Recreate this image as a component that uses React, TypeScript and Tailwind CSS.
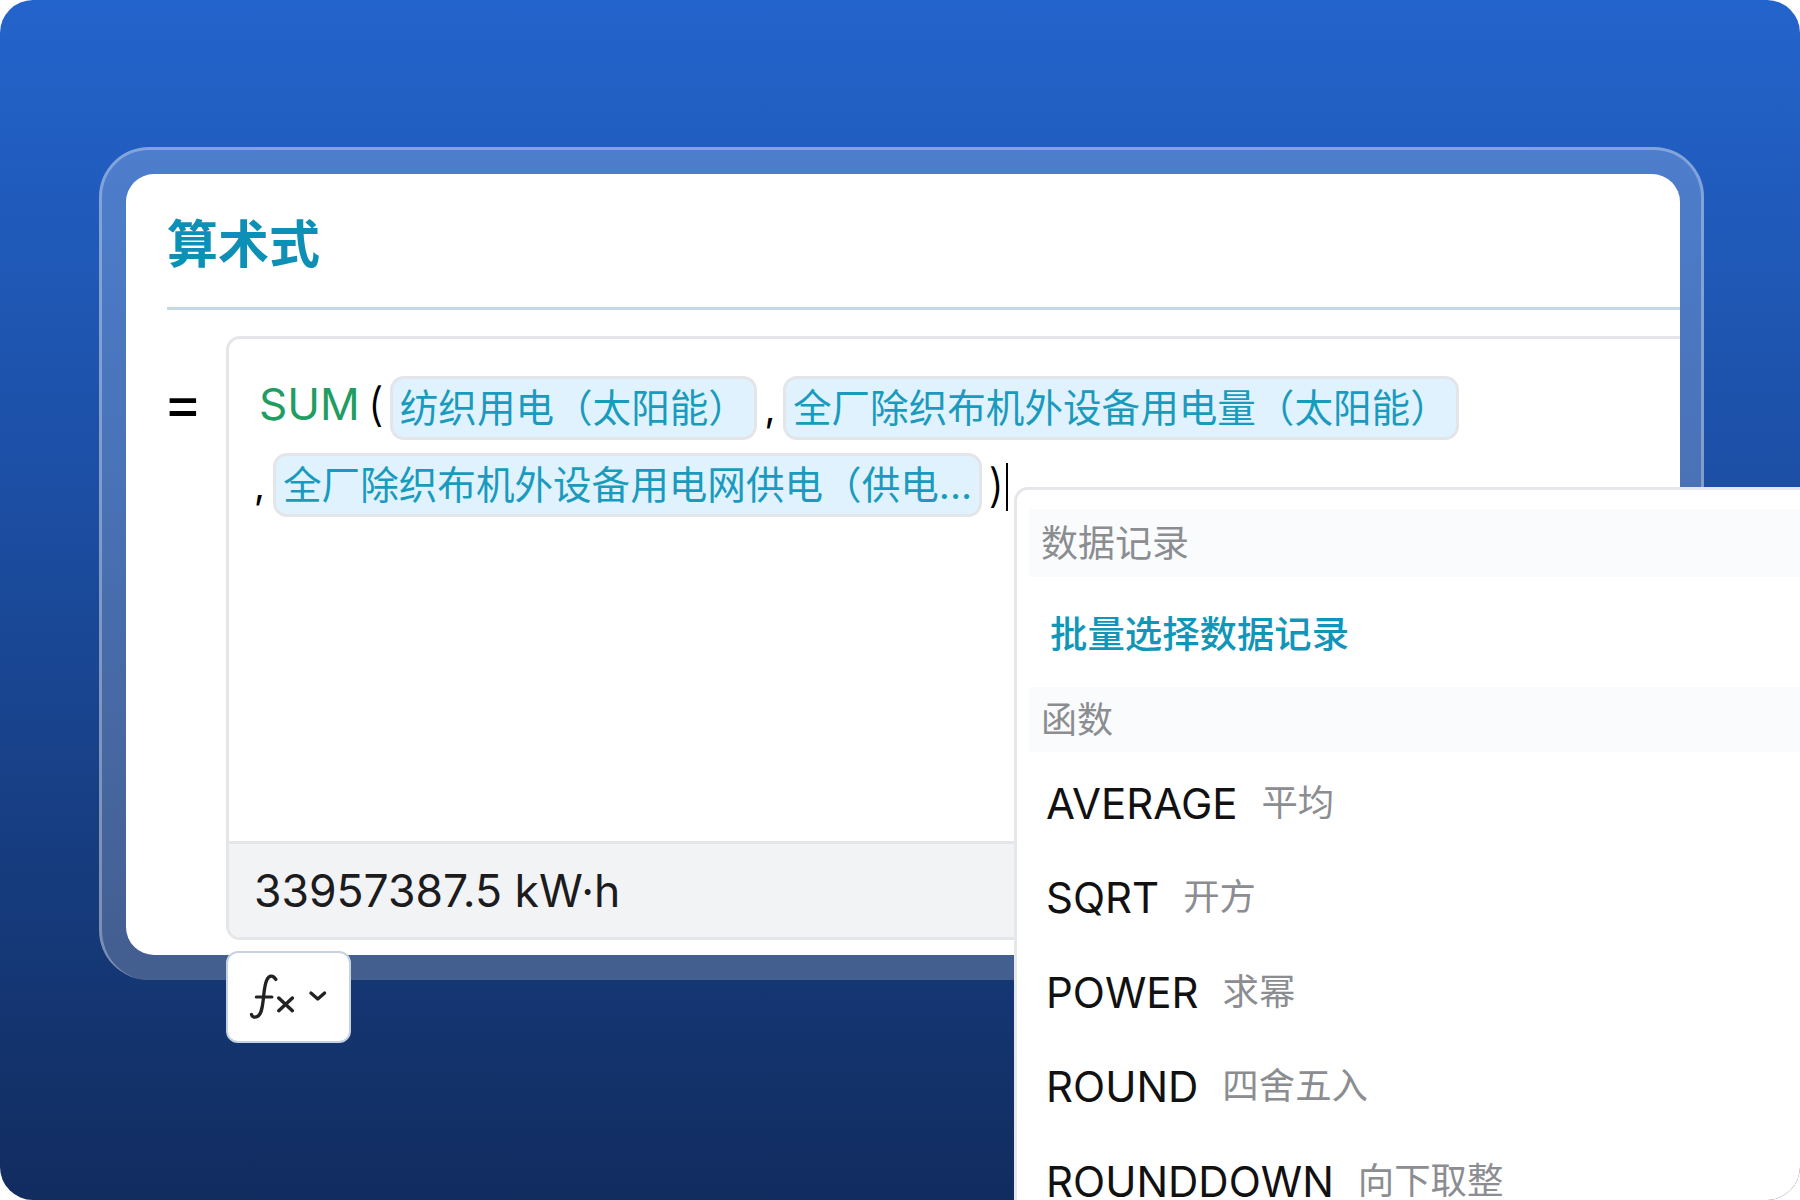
const font = '[font-family:Inter,"Noto_Sans_CJK_SC",sans-serif]'

const functions = [
  { name: 'AVERAGE', desc: '平均' },
  { name: 'SQRT', desc: '开方' },
  { name: 'POWER', desc: '求幂' },
  { name: 'ROUND', desc: '四舍五入' },
  { name: 'ROUNDDOWN', desc: '向下取整' },
]

function Chip({ children }: { children: string }) {
  return (
    <span className="flex h-[64px] shrink-0 items-center whitespace-nowrap rounded-[14px] border-[3px] border-[#e3e5e8] bg-[#e0f2fe] px-[7px] pt-[2px] text-[38.6px] text-[#1a9bbd]">
      {children}
    </span>
  )
}

function FxIcon() {
  return (
    <svg width="124" height="91" viewBox="16 22 124 91" fill="none" stroke="#222" strokeLinecap="round" strokeLinejoin="round">
      <path strokeWidth="3.4" d="M65 49C62 44 58 45 56 49C53 55 53 63 52 71C51 79 50 85 46 87C44 88 41 88 40 85" />
      <path strokeWidth="3.2" d="M45 67H61" />
      <path strokeWidth="3.6" d="M68 68L82 81M82 68L68 81" />
      <path strokeWidth="3.4" d="M101 63L108 69L115 63" />
    </svg>
  )
}

export default function App() {
  return (
    <div className={`relative h-[1200px] w-[1800px] overflow-hidden rounded-[33px] bg-gradient-to-b from-[#2364cc] via-[#1c4fa5] via-40% to-[#112c5f] ${font}`}>
      <div className="ml-[99px] h-[147px]" />
      <div className="ml-[99px] h-[833px] w-[1605px] rounded-[50px] border-[3px] border-b-0 border-white/30 bg-white/20 px-[24px] pt-[24px]">
        <div className="flex h-[781px] w-[1554px] flex-col overflow-hidden rounded-[28px] bg-white pl-[41px]">
          <h1 className="flex h-[136px] shrink-0 items-center border-b-[3px] border-[#c4d9e3] pt-[10px] text-[51px] font-bold text-[#0e8fb5]">
            算术式
          </h1>
          <div className="mt-[26px] flex items-start">
            <span className="-ml-[4px] mt-[31px] w-[63px] shrink-0 text-[60px] leading-[70px] text-black">=</span>
            <div className="flex h-[604px] w-[1500px] shrink-0 flex-col overflow-hidden rounded-[14px] border-[3px] border-[#e5e6e9]">
              <div className="flex-1 pt-[37px]">
                <div className="flex h-[64px] items-center pl-[30px]">
                  <span className="mb-[8px] text-[44px] leading-none text-[#1f9d63]">SUM</span>
                  <span className="mb-[8px] ml-[8px] mr-[6px] text-[46px] font-light leading-none text-black">(</span>
                  <Chip>纺织用电（太阳能）</Chip>
                  <span className="w-[26px] text-center text-[38px] leading-none text-black">,</span>
                  <Chip>全厂除织布机外设备用电量（太阳能）</Chip>
                </div>
                <div className="mt-[13px] flex h-[64px] items-center pl-[25px]">
                  <span className="w-[19px] text-[38px] leading-none text-black">,</span>
                  <Chip>全厂除织布机外设备用电网供电（供电...</Chip>
                  <span className="ml-[6px] text-[46px] font-light leading-none text-black">)</span>
                  <span className="ml-[2px] mt-[3px] h-[48px] w-[2px] bg-black" />
                </div>
              </div>
              <div className="flex h-[96px] items-center border-t-[3px] border-[#e5e6e9] bg-[#f2f3f5] pl-[25px] pt-[1px] text-[44.5px] text-[#1c1c1e]">
                33957387.5 kW·h
              </div>
            </div>
          </div>
        </div>
      </div>

      <button className="absolute left-[226px] top-[951px] flex h-[92px] w-[125px] items-center justify-center rounded-[12px] border-[2px] border-[#c6d3df] bg-white">
        <FxIcon />
      </button>

      <div className="absolute left-[1014px] top-[487px] h-[760px] w-[820px] rounded-tl-[14px] border-[3px] border-[#e5e7eb] bg-white pl-[12px] pt-[19px]">
        <div className="flex h-[68px] items-center bg-[#fafbfc] pl-[12px] pt-[2px] text-[37px] text-[#8b8d91]">数据记录</div>
        <div className="flex h-[110px] items-center pl-[21px] pt-[6px] text-[37.4px] font-medium text-[#1296b8]">批量选择数据记录</div>
        <div className="flex h-[65px] items-center bg-[#fafbfc] pl-[12px] text-[36px] text-[#8b8d91]">函数</div>
        <div className="mt-[4px] flex flex-col">
          {functions.map(f => (
            <div key={f.name} className="flex h-[94.5px] items-center pl-[17px] text-[42px] text-[#111]">
              <span>{f.name}</span>
              <span className="ml-[24px] text-[36.4px] text-[#8b8d91]">{f.desc}</span>
            </div>
          ))}
        </div>
      </div>
    </div>
  )
}
